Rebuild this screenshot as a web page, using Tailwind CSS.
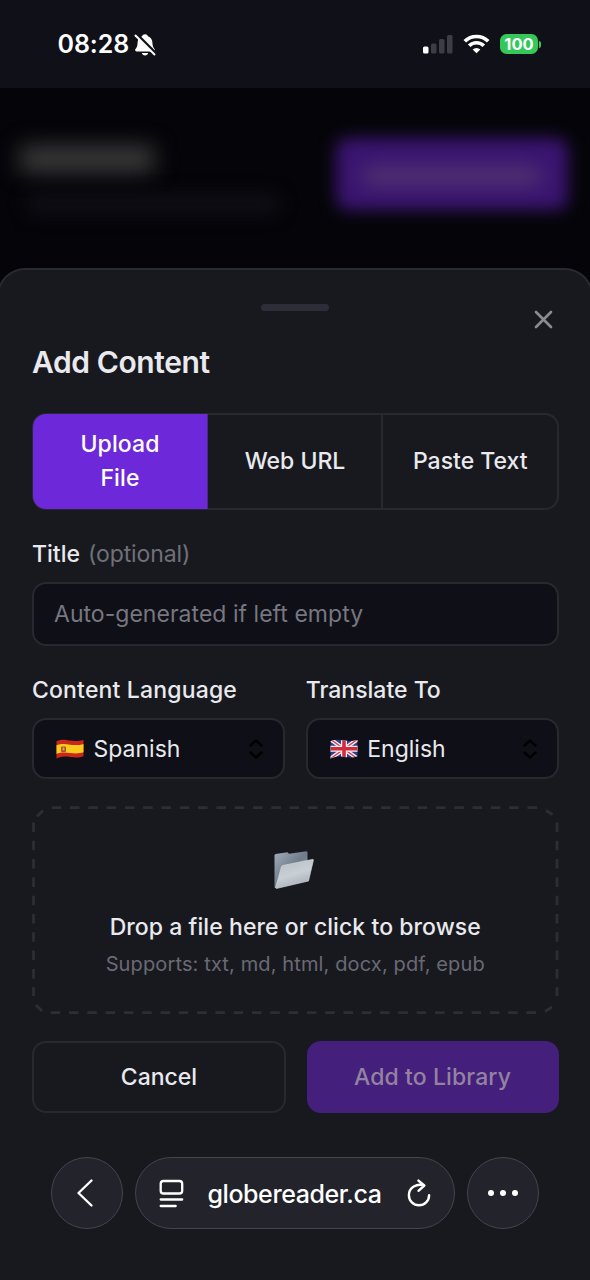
<!DOCTYPE html>
<html lang="en">
<head>
<meta charset="utf-8">
<title>Add Content</title>
<script src="https://cdn.jsdelivr.net/npm/@tailwindcss/browser@4"></script>
</head>
<body class="w-[590px] h-[1280px] overflow-hidden bg-[#050509] font-['Inter','Liberation_Sans',sans-serif] text-[#e9e9ee] text-[23px] leading-none">
<div class="flex h-[1280px] flex-col">

  <!-- status bar -->
  <header class="flex h-[88px] shrink-0 items-center bg-[#101018] pl-[57.500px] pr-[49px] text-white">
    <span class="text-[25px] font-semibold tracking-[-0.1px]">08:28</span>
    <svg class="ml-[5px] mt-px" width="22" height="24" viewBox="0 0 22 24" fill="none">
      <path d="M11 1.200c1.600 0 2.600.9 2.900 2.100 2.900 1 4.400 3.300 4.500 6.300.1 3.500.6 4.600 2.100 6.500.9 1.200.3 2.300-1.100 2.300H2.600c-1.400 0-2-1.100-1.100-2.300C3 14.200 3.500 13.100 3.600 9.600 3.700 6.600 5.200 4.300 8.100 3.300 8.400 2.100 9.400 1.200 11 1.200Z" fill="#fff"/>
      <path d="M7.800 20h6.400c-.4 1.500-1.600 2.400-3.200 2.400S8.200 21.500 7.800 20Z" fill="#fff"/>
      <path d="M2.500 1.500 22 21" stroke="#101018" stroke-width="3.600"/>
      <path d="M1.500 2.500 20.500 21.500" stroke="#fff" stroke-width="1.900" stroke-linecap="round"/>
    </svg>
    <div class="ml-auto flex items-center">
      <svg width="31" height="20" viewBox="0 0 31 20">
        <rect x="0" y="12.500" width="5.500" height="7" rx="1.500" fill="#fff"/>
        <rect x="8" y="9.500" width="5.500" height="10" rx="1.500" fill="#3d3d45"/>
        <rect x="16" y="5" width="5.500" height="14.500" rx="1.500" fill="#3d3d45"/>
        <rect x="24" y="1" width="5.500" height="18.500" rx="1.500" fill="#3d3d45"/>
      </svg>
      <svg class="ml-[9px]" width="27" height="20" viewBox="0 0 27 20" fill="none" stroke="#fff" stroke-width="3.700">
        <path d="M1.800 7.300a16.600 16.600 0 0 1 23.400 0"/>
        <path d="M6.200 11.800a10.300 10.300 0 0 1 14.600 0"/>
        <path d="M13.500 19.300 9.700 15.500a5.400 5.400 0 0 1 7.600 0Z" fill="#fff" stroke="none"/>
      </svg>
      <div class="ml-2.5 flex h-5 w-[38px] items-center justify-center rounded-[6.500px] bg-[#34c759]"><span class="text-[16.500px] font-bold">100</span></div>
      <div class="ml-px h-[7px] w-0.5 rounded-r-full bg-[#34c759]"></div>
    </div>
  </header>

  <!-- dimmed page behind the sheet -->
  <section class="flex h-[180px] shrink-0 justify-between pl-5 pr-[22px] pt-[50px]">
    <div>
      <div class="mt-2 h-[26px] w-[134px] rounded bg-[#3c3c3c] blur-[11px]"></div>
      <div class="mt-6 ml-2 h-4 w-[250px] bg-[#101017] blur-[9px]"></div>
    </div>
    <div class="h-[72px] w-[232px] rounded-xl bg-[#3a1470] p-[26px] blur-[8px]">
      <div class="mt-1 h-4 rounded-full bg-[#583c70] blur-[8px]"></div>
    </div>
  </section>

  <!-- bottom sheet -->
  <main class="-mx-[3px] flex grow flex-col rounded-t-[28px] border-2 border-b-0 border-[#292930] bg-[#18191f] pl-[33px] pr-[32.500px]">
    <div class="flex h-[68px]">
      <div class="ml-[229px] mt-[33.500px] h-[7px] w-[68px] rounded-full bg-[#2d2d38]"></div>
      <svg class="ml-auto mr-[5.500px] mt-[39.500px]" width="19" height="19" viewBox="0 0 19 19" stroke="#8a8a92" stroke-width="2.700" stroke-linecap="round"><path d="M2 2 17 17M17 2 2 17"/></svg>
    </div>
    <h1 class="flex h-12 items-center text-[30px] font-semibold tracking-[-0.4px]">Add Content</h1>

    <div class="mt-[27px] flex h-[97px] rounded-[14px] border-2 border-[#28282f] text-center font-medium">
      <div class="-m-px flex w-[175px] items-center justify-center rounded-l-[13px] border-r border-[#4b2a86] bg-[#6d28d9] leading-[33.500px] tracking-[0.1px] text-white">Upload<br>File</div>
      <div class="flex w-[176px] items-center justify-center border-r-2 border-[#28282f] pl-0.5">Web URL</div>
      <div class="flex grow items-center justify-center pl-px">Paste Text</div>
    </div>

    <div class="mt-[29px] flex h-[30px] items-center gap-2"><span class="font-medium">Title</span><span class="tracking-[-0.1px] text-[#70707b]">(optional)</span></div>
    <div class="mt-[13px] flex h-16 items-center rounded-[14px] border-2 border-[#28282f] bg-[#0f0f17] pl-5 tracking-[0.03px] text-[#777780]">Auto-generated if left empty</div>

    <div class="mt-[29px] grid grid-cols-2 gap-[21px]">
      <div>
        <div class="flex h-[30px] items-center font-medium tracking-[0.17px]">Content Language</div>
        <div class="mt-[13px] flex h-[61px] items-center rounded-[14px] border-2 border-[#28282f] bg-[#0f0f17] pl-[22px] pr-5">
          <svg width="28" height="20" viewBox="0 0 28 20">
            <defs><clipPath id="fl"><path d="M.5 2.200C7-.5 10 1 14 1.600c4.500.7 9 .8 13.500-.6v16.300c-4.500 1.700-9 1.300-13.500.7-4-.6-8-.8-13.500 1.500Z"/></clipPath></defs>
            <g clip-path="url(#fl)"><rect width="28" height="20" fill="#c9261c"/><path d="M0 6.300c6-2 10-1.200 14-.6 5 .6 9 .5 14-.8v8.400c-5 1.400-9 1.300-14 .7-4-.6-8-1.200-14 1Z" fill="#f8cb1c"/><rect x="5" y="7.500" width="5" height="5.500" rx="1" fill="#a8502a"/><rect x="6.500" y="8.500" width="2" height="3" fill="#d9a07a"/></g>
          </svg>
          <span class="ml-[9.500px] mt-0.5">Spanish</span>
          <svg class="ml-auto" width="14" height="20" viewBox="0 0 14 20" fill="none" stroke="#000" stroke-width="2.400" stroke-linecap="round" stroke-linejoin="round"><path d="M1.500 6.500 7 1.500l5.500 5M1.500 13.500l5.500 5 5.500-5"/></svg>
        </div>
      </div>
      <div>
        <div class="flex h-[30px] items-center font-medium">Translate To</div>
        <div class="mt-[13px] flex h-[61px] items-center rounded-[14px] border-2 border-[#28282f] bg-[#0f0f17] pl-[22px] pr-5">
          <svg width="28" height="20" viewBox="0 0 28 20">
            <g clip-path="url(#fl)"><rect width="28" height="20" fill="#2b3f86"/><path d="M0 0 28 20M28 0 0 20" stroke="#f1eef2" stroke-width="4"/><path d="M0 0 28 20M28 0 0 20" stroke="#d63a4c" stroke-width="1.400"/><path d="M14 0v20M0 9.800h28" stroke="#f1eef2" stroke-width="6"/><path d="M14 0v20M0 9.800h28" stroke="#d42a3e" stroke-width="3.600"/></g>
          </svg>
          <span class="ml-[9.500px] mt-0.5">English</span>
          <svg class="ml-auto" width="14" height="20" viewBox="0 0 14 20" fill="none" stroke="#000" stroke-width="2.400" stroke-linecap="round" stroke-linejoin="round"><path d="M1.500 6.500 7 1.500l5.500 5M1.500 13.500l5.500 5 5.500-5"/></svg>
        </div>
      </div>
    </div>

    <div class="relative mt-[27px] flex h-[209px] flex-col items-center">
      <!-- dashed outline -->
      <svg class="absolute inset-0" width="527" height="209" viewBox="0 0 527 209" fill="none" stroke="#2d2d36" stroke-width="2.800">
        <path d="M19.700 1.700H505M18.700 206.700H505M1.500 16.500V190M525 16.500V190" stroke-dasharray="9.500 8.800"/>
        <path d="M5 10.500l6-6M514 4.500l6.500 4M4 199l6 6M513 205.500l7-4.500"/>
      </svg>
      <svg class="mr-0.5 mt-[44px]" width="42" height="40" viewBox="0 0 42 40">
        <defs>
          <linearGradient id="fb" x1="0" y1="0" x2="1" y2="1"><stop offset="0" stop-color="#a3adb8"/><stop offset=".5" stop-color="#6f7c8a"/><stop offset="1" stop-color="#8a949f"/></linearGradient>
          <linearGradient id="ff" x1="0" y1="0" x2=".4" y2="1"><stop offset="0" stop-color="#b4bcc5"/><stop offset=".6" stop-color="#c9cfd5"/><stop offset="1" stop-color="#aab1b9"/></linearGradient>
        </defs>
        <path d="M1.500 5 2.500 4 14.500 2.200 16 3.800 33.500 1.200 34.500 2.200V25L3.500 38 1.500 37.500Z" fill="url(#fb)"/>
        <path d="M8.500 16.500 9.500 15.500 40 9.300 40.500 10 35.500 31 3.500 38.500 2.500 37.800Z" fill="url(#ff)" stroke="#d5dade" stroke-width=".6"/>
      </svg>
      <div class="mt-[22px] flex h-[30px] items-center font-medium tracking-[0.07px]">Drop a file here or click to browse</div>
      <div class="mt-[7px] flex h-[30px] items-center text-[20px] tracking-[0.13px] text-[#6a6a75]">Supports: txt, md, html, docx, pdf, epub</div>
    </div>

    <div class="mt-[26px] flex h-[72px] justify-between font-medium">
      <div class="flex w-[254px] items-center justify-center rounded-[14px] border-2 border-[#28282f]">Cancel</div>
      <div class="flex w-[252px] items-center justify-center rounded-[14px] bg-[#441f7c] tracking-[0.1px] text-[#9383a0]">Add to Library</div>
    </div>

    <!-- browser toolbar -->
    <nav class="mt-11 ml-[19px] flex h-[72px] gap-3 text-white">
      <div class="flex w-[72px] items-center justify-center rounded-full border border-[#44454d] bg-[#22232b]">
        <svg class="-ml-1" width="18" height="30" viewBox="0 0 18 30" fill="none" stroke="#fff" stroke-width="2.400" stroke-linecap="round" stroke-linejoin="round"><path d="M15.500 2.500 2.500 15 15.500 27.500"/></svg>
      </div>
      <div class="flex w-[320px] items-center rounded-full border border-[#44454d] bg-[#22232b] pl-[22.500px] pr-[23px]">
        <svg width="25" height="29" viewBox="0 0 25 29" fill="none" stroke="#fff" stroke-width="2.300" stroke-linecap="round"><rect x="1.700" y="2" width="21.500" height="12.500" rx="2.800"/><path d="M1.700 20.500h21.500M1.700 27h15"/></svg>
        <span class="ml-6 mt-0.5 text-[25px] font-medium tracking-[-0.43px]">globereader.ca</span>
        <svg class="ml-auto" width="25" height="29" viewBox="0 0 25 29" fill="none" stroke="#fff" stroke-width="2.400" stroke-linecap="round" stroke-linejoin="round"><path d="M17.500 6.300C11 4.300 2.900 8.300 2.900 16.200A10.100 10.100 0 0 0 23.100 16.200M12.500 1.600l5.800 4.900-5.800 5.300"/></svg>
      </div>
      <div class="flex w-[72px] items-center justify-center gap-[5.500px] rounded-full border border-[#44454d] bg-[#22232b]">
        <i class="size-[6.500px] rounded-full bg-white"></i><i class="size-[6.500px] rounded-full bg-white"></i><i class="size-[6.500px] rounded-full bg-white"></i>
      </div>
    </nav>
  </main>
</div>
</body>
</html>
